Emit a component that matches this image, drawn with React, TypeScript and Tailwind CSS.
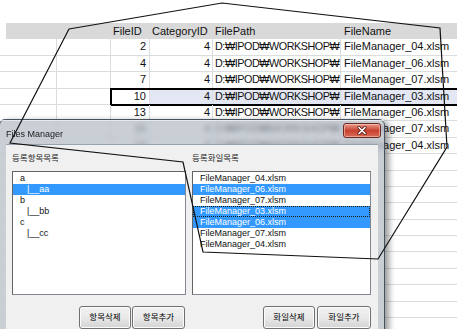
import React from 'react'

const GRID = 'border-[#dadcdd]'

const sheetRows = [
  { id: '2', cat: '4', name: 'FileManager_04.xlsm' },
  { id: '4', cat: '4', name: 'FileManager_06.xlsm' },
  { id: '7', cat: '4', name: 'FileManager_07.xlsm' },
  { id: '10', cat: '4', name: 'FileManager_03.xlsm', selected: true },
  { id: '13', cat: '4', name: 'FileManager_06.xlsm' },
  { id: '16', cat: '4', name: 'FileManager_07.xlsm' },
  { id: '19', cat: '4', name: 'FileManager_04.xlsm' },
]

const categories = [
  { label: 'a', indent: false },
  { label: '|__aa', indent: true, selected: true },
  { label: 'b', indent: false },
  { label: '|__bb', indent: true },
  { label: 'c', indent: false },
  { label: '|__cc', indent: true },
]

const files = [
  { name: 'FileManager_04.xlsm' },
  { name: 'FileManager_06.xlsm', selected: true },
  { name: 'FileManager_07.xlsm' },
  { name: 'FileManager_03.xlsm', selected: true, focused: true },
  { name: 'FileManager_06.xlsm', selected: true },
  { name: 'FileManager_07.xlsm' },
  { name: 'FileManager_04.xlsm' },
]

function SheetRow({ row }: { row?: any }) {
  const sel = row?.selected
  return (
    <div className={`relative flex h-[16.4px] border-b ${GRID} text-[11px] leading-[15px] text-[#111]`}>
      <div className={`w-[57px] shrink-0 border-r ${GRID}`} />
      <div className={`w-[54px] shrink-0 border-r ${GRID}`} />
      <div className={`w-[39px] shrink-0 border-r ${GRID} text-right pr-[3px]`}>{row?.id}</div>
      <div className={`w-[63px] shrink-0 border-r ${GRID} text-right pr-[2px] ${sel ? 'bg-[#e3e7f3]' : ''}`}>{row?.cat}</div>
      <div className={`w-[128px] shrink-0 border-r ${GRID} pl-[2px] whitespace-nowrap text-[10.8px] tracking-[-0.45px] ${sel ? 'bg-[#e3e7f3]' : ''}`}>
        {row ? 'D:₩IPOD₩WORKSHOP₩' : ''}
      </div>
      <div className={`flex-1 pl-[3px] whitespace-nowrap ${sel ? 'bg-[#e3e7f3]' : ''}`}>{row?.name}</div>
      {sel && <div className="absolute left-[110px] -top-[1px] -right-[4px] h-[18px] border-2 border-black" />}
    </div>
  )
}

function Sheet() {
  const empty = Array.from({ length: 12 })
  return (
    <div className="pt-[23px] font-['Liberation_Sans','DejaVu_Sans',sans-serif]">
      <div className="flex h-[16.4px] ml-[6px] bg-[#d9d9d9] text-[11px] leading-[16px] text-[#111]">
        <div className="w-[51px] shrink-0" />
        <div className="w-[54px] shrink-0" />
        <div className="w-[39px] shrink-0 pl-[2px]">FileID</div>
        <div className="w-[63px] shrink-0 pl-[2px]">CategoryID</div>
        <div className="w-[128px] shrink-0 pl-[2px]">FilePath</div>
        <div className="flex-1 pl-[3px]">FileName</div>
      </div>
      {sheetRows.map((r, i) => <SheetRow key={i} row={r} />)}
      {empty.map((_, i) => <SheetRow key={'e' + i} />)}
    </div>
  )
}

function WinButton({ children, w }: { children: React.ReactNode; w: string }) {
  return (
    <div className={`${w} h-[23px] rounded-[3px] border border-[#707070] bg-gradient-to-b from-[#f2f2f2] via-[#e9e9e9] to-[#d3d3d3] shadow-[inset_0_0_0_1px_#fcfcfc] flex items-center justify-center text-[8.5px] text-black`}>
      {children}
    </div>
  )
}

function CloseButton() {
  return (
    <div className="mt-[3px] w-[38px] h-[15px] rounded-[3px] border border-[#6b2a22] bg-gradient-to-b from-[#e69a8c] via-[#c7412e] to-[#d76a55] shadow-[inset_0_0_0_1px_rgba(255,220,210,0.5)] flex items-center justify-center">
      <svg width="10" height="9" viewBox="0 0 10 9">
        <path d="M2 1.5 L8 7.5 M8 1.5 L2 7.5" stroke="#5a1a12" strokeWidth="3.2" strokeLinecap="round" />
        <path d="M2 1.5 L8 7.5 M8 1.5 L2 7.5" stroke="#ffffff" strokeWidth="1.7" strokeLinecap="round" />
      </svg>
    </div>
  )
}

function FilesManager() {
  return (
    <div className="absolute left-[-1px] top-[119px] w-[386px] h-[222px] rounded-t-[6px] border border-[#48525e] bg-[#b4bbc4]/70 backdrop-blur-[2.5px] shadow-[4px_2px_6px_rgba(0,0,0,0.4)] flex flex-col font-['Liberation_Sans','Noto_Sans_CJK_KR',sans-serif]">
      <div className="h-[24px] shrink-0 flex items-start justify-between pl-[6px] pr-[3px] shadow-[inset_0_1px_0_rgba(255,255,255,0.6)]">
        <span className="mt-[8px] text-[9px] leading-[12px] text-[#1a1a1a]">Files Manager</span>
        <CloseButton />
      </div>
      <div className="flex-1 mx-[6px] bg-[#f0f0f0] border-t border-[#9aa3ad] flex gap-[6px] pl-[6px] pr-[7px] pt-[6px]">
        <div className="w-[174px] flex flex-col">
          <div className="h-[14px] leading-[14px] text-[8.5px] text-[#222]">등록항목목록</div>
          <div className="mt-[6px] h-[124px] bg-white border border-[#828790] border-l-[#646464] border-t-[#646464] pt-px text-[9px] leading-[11px] text-[#111]">
            {categories.map((c, i) => (
              <div key={i} className={`h-[11px] ${c.indent ? 'pl-[14px]' : 'pl-[7px]'} ${c.selected ? 'bg-[#3399ff] text-white' : ''}`}>{c.label}</div>
            ))}
          </div>
          <div className="mt-[11px] flex justify-end gap-[1px] pr-[1px]">
            <WinButton w="w-[52px]">항목삭제</WinButton>
            <WinButton w="w-[53px]">항목추가</WinButton>
          </div>
        </div>
        <div className="w-[179px] flex flex-col">
          <div className="h-[14px] leading-[14px] text-[8.5px] text-[#222]">등록화일목록</div>
          <div className="mt-[6px] h-[124px] bg-white border border-[#828790] border-l-[#646464] border-t-[#646464] pt-px text-[9px] leading-[11px] text-[#111]">
            {files.map((f, i) => (
              <div key={i} className={`h-[11px] pl-[7px] ${f.selected ? 'bg-[#3399ff] text-white' : ''} ${f.focused ? 'outline outline-1 outline-dotted outline-[#1a1a1a] -outline-offset-1' : ''}`}>{f.name}</div>
            ))}
          </div>
          <div className="mt-[11px] flex justify-end gap-[2px]">
            <WinButton w="w-[52px]">화일삭제</WinButton>
            <WinButton w="w-[54px]">화일추가</WinButton>
          </div>
        </div>
      </div>
    </div>
  )
}

function Callout() {
  return (
    <svg className="absolute inset-0 pointer-events-none" width="457" height="329" viewBox="0 0 457 329">
      <polygon
        points="69,29 222,3 440,28 447,147 378,259 203,252 183,162 10,143"
        fill="none"
        stroke="#111"
        strokeWidth="1.2"
        strokeLinejoin="miter"
      />
    </svg>
  )
}

export default function App() {
  return (
    <div className="relative w-[457px] h-[329px] overflow-hidden bg-white">
      <Sheet />
      <FilesManager />
      <Callout />
    </div>
  )
}
